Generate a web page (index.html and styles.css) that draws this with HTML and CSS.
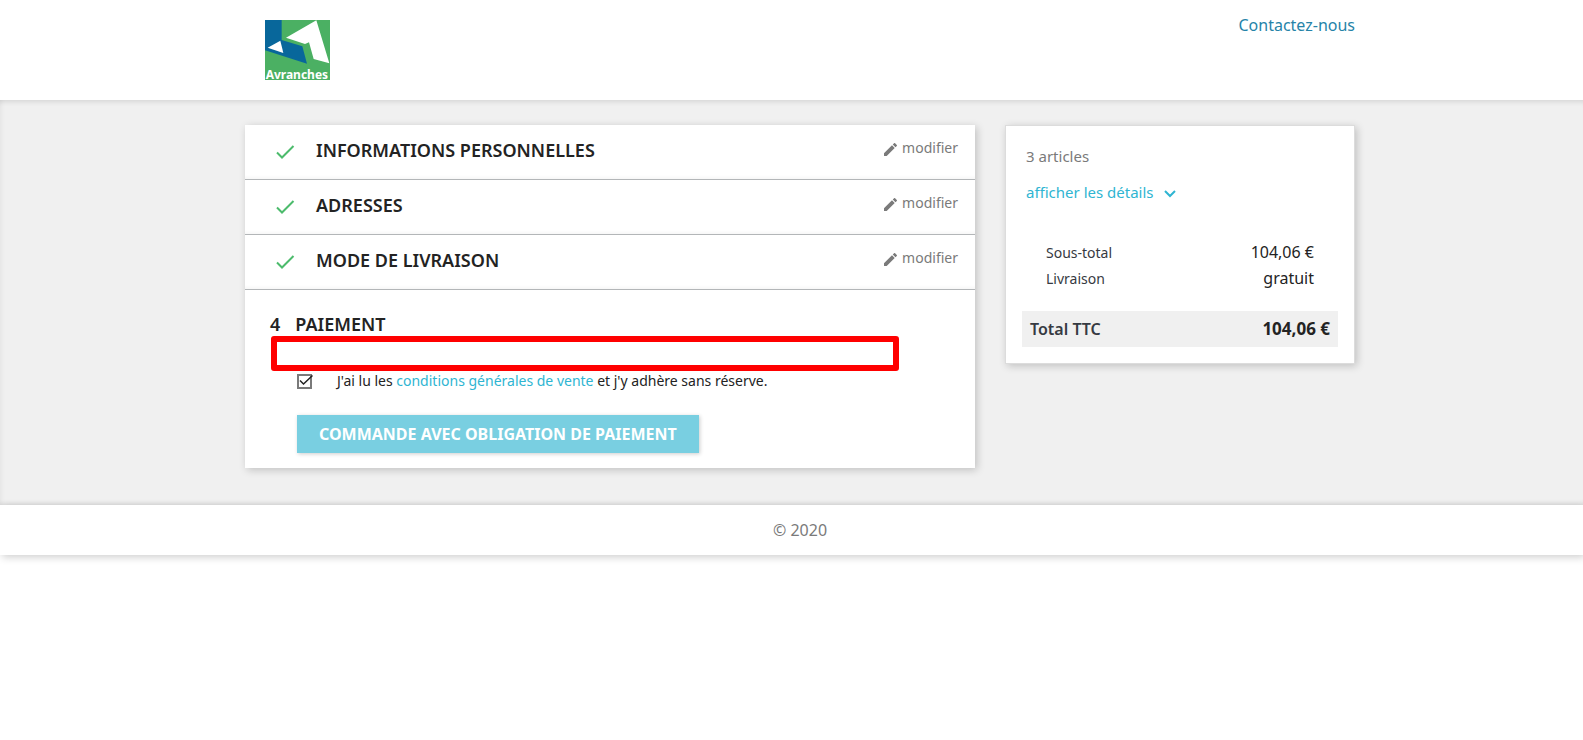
FILE: index.html
```html
<!DOCTYPE html>
<html lang="fr">
<head>
<meta charset="utf-8">
<title>Commande</title>
<meta name="viewport" content="width=device-width, initial-scale=1">
<link rel="stylesheet" href="styles.css">
</head>
<body>
<header class="header">
  <div class="container header-inner">
    <a class="logo" href="#" aria-label="Avranches">
      <svg width="65" height="60" viewBox="0 0 195 180">
        <rect width="195" height="180" fill="#4bb063"/>
        <path d="M0 0H50V60L112 79L126 131L0 91Z" fill="#08679b"/>
        <path d="M8 83L46 62L55 99Z" fill="#fff"/>
        <path d="M63 53L154 1L193 130L146 117L132 67L120 72Z" fill="#fff"/>
        <text class="logo-text" x="2" y="176">Avranches</text>
      </svg>
    </a>
    <a class="contact" href="#">Contactez-nous</a>
  </div>
</header>
<main class="main">
  <div class="container columns">
    <div class="card checkout">
      <section class="step">
        <svg class="check" width="20" height="16" viewBox="0 0 20 16"><path d="M1 8.500L6 13.500L17.500 2"/></svg>
        <h1 class="step-title">INFORMATIONS PERSONNELLES</h1>
        <button class="edit" type="button"><svg width="13" height="13" viewBox="3 3 18 18"><path d="M3 17.250V21h3.750L17.810 9.940l-3.750-3.750L3 17.250zM20.710 7.040a1 1 0 0 0 0-1.410l-2.340-2.340a1 1 0 0 0-1.410 0l-1.830 1.830 3.750 3.750 1.830-1.830z"/></svg>modifier</button>
      </section>
      <section class="step">
        <svg class="check" width="20" height="16" viewBox="0 0 20 16"><path d="M1 8.500L6 13.500L17.500 2"/></svg>
        <h1 class="step-title">ADRESSES</h1>
        <button class="edit" type="button"><svg width="13" height="13" viewBox="3 3 18 18"><path d="M3 17.250V21h3.750L17.810 9.940l-3.750-3.750L3 17.250zM20.710 7.040a1 1 0 0 0 0-1.410l-2.340-2.340a1 1 0 0 0-1.410 0l-1.830 1.830 3.750 3.750 1.830-1.830z"/></svg>modifier</button>
      </section>
      <section class="step">
        <svg class="check" width="20" height="16" viewBox="0 0 20 16"><path d="M1 8.500L6 13.500L17.500 2"/></svg>
        <h1 class="step-title">MODE DE LIVRAISON</h1>
        <button class="edit" type="button"><svg width="13" height="13" viewBox="3 3 18 18"><path d="M3 17.250V21h3.750L17.810 9.940l-3.750-3.750L3 17.250zM20.710 7.040a1 1 0 0 0 0-1.410l-2.340-2.340a1 1 0 0 0-1.410 0l-1.830 1.830 3.750 3.750 1.830-1.830z"/></svg>modifier</button>
      </section>
      <section class="payment">
        <h1 class="payment-title"><span>4</span><span>PAIEMENT</span></h1>
        <div class="highlight"></div>
        <div class="terms">
          <span class="terms-control">
            <input class="terms-box" type="checkbox" id="terms" checked>
            <svg class="terms-tick" width="16" height="15" viewBox="0 0 16 15"><path d="M3 6.500L6.500 10L15.500 1.500"/></svg>
          </span>
          <label for="terms">J'ai lu les <a class="link" href="#">conditions générales de vente</a> et j'y adhère sans réserve.</label>
        </div>
        <button class="order" type="submit">COMMANDE AVEC OBLIGATION DE PAIEMENT</button>
      </section>
    </div>
    <aside class="card summary">
      <p class="count">3 articles</p>
      <a class="link details" href="#">afficher les détails
        <svg width="12" height="8" viewBox="0 0 12 8"><path d="M1 1L6 6L11 1"/></svg>
      </a>
      <dl class="lines">
        <div class="line"><dt>Sous-total</dt><dd>104,06 €</dd></div>
        <div class="line"><dt>Livraison</dt><dd>gratuit</dd></div>
      </dl>
      <div class="total"><span>Total TTC</span><span class="total-value">104,06 €</span></div>
    </aside>
  </div>
</main>
<footer class="footer">© 2020</footer>
</body>
</html>
```

FILE: styles.css
```css
* {
  box-sizing: border-box;
}

body {
  min-height: 100vh;
  margin: 0;
  background: #fff;
  color: #232323;
  font-family: "Noto Sans", sans-serif;
  font-size: 16px;
  line-height: 22px;
}

h1,
p,
dl,
dd {
  margin: 0;
}

a {
  text-decoration: none;
}

button {
  border: 0;
  font-family: inherit;
  cursor: pointer;
}

.header,
.main,
.footer {
  padding-left: 17px;
}

.container {
  max-width: 1140px;
  margin: 0 auto;
  padding: 0 15px;
}

.header-inner {
  display: flex;
  justify-content: space-between;
  align-items: flex-start;
  padding-top: 14px;
  padding-bottom: 20px;
}

.logo {
  margin: 6px 0 0 20px;
}

.logo svg {
  display: block;
  overflow: visible;
}

.logo-text {
  fill: #fff;
  font-family: "Noto Sans", sans-serif;
  font-size: 36px;
  font-weight: 700;
}

.contact {
  color: #2583a8;
}

.main {
  padding-top: 25px;
  padding-bottom: 37px;
  background: #f0f0f0;
  box-shadow:
    inset 0 6px 5px -4px rgba(0, 0, 0, 0.11),
    inset 0 -5px 5px -4px rgba(0, 0, 0, 0.08),
    inset 5px 0 5px -4px rgba(0, 0, 0, 0.06);
}

.columns {
  display: flex;
  align-items: flex-start;
  gap: 30px;
}

.card {
  background: #fff;
  box-shadow: 2px 2px 8px 0 rgba(0, 0, 0, 0.2);
}

.checkout {
  flex: 1;
}

.step {
  display: flex;
  align-items: flex-start;
  min-height: 55px;
  padding: 11px 17px 0 31px;
  border-bottom: 1px solid #b3b6b8;
  box-shadow: inset 0 -5px 4px -4px rgba(0, 0, 0, 0.05);
}

.check {
  margin: 8px 20px 0 0;
  fill: none;
  stroke: #4cbb6c;
  stroke-width: 2;
}

.step-title,
.payment-title {
  font-size: 18px;
  font-weight: 600;
}

.step-title {
  flex: 1;
  padding-top: 3px;
}

.edit {
  display: flex;
  align-items: center;
  gap: 5px;
  padding: 0;
  background: none;
  color: #7a7a7a;
  font-size: 14px;
  line-height: 24px;
}

.edit svg {
  margin-top: 2px;
  fill: #7a7a7a;
}

.payment {
  padding: 23px 76px 15px 25px;
}

.payment-title {
  display: flex;
  gap: 15px;
}

.highlight {
  height: 35px;
  margin: 1px 0 0 1px;
  border: 6px solid #f00;
  border-radius: 3px;
}

.terms {
  display: flex;
  align-items: center;
  gap: 24px;
  margin-left: 27px;
  font-size: 14px;
  line-height: 20px;
}

.terms-control {
  display: grid;
}

.terms-box,
.terms-tick {
  grid-area: 1 / 1;
}

.terms-box {
  appearance: none;
  width: 15px;
  height: 15px;
  margin: 0;
  border: 2px solid #7a7a7a;
}

.terms-tick {
  fill: none;
  stroke: #232323;
  stroke-width: 1.5;
  pointer-events: none;
  visibility: hidden;
}

.terms-box:checked + .terms-tick {
  visibility: visible;
}

.link {
  color: #2fb5d2;
}

.order {
  display: block;
  margin: 24px 0 0 27px;
  padding: 8px 22px;
  background: #79cfe1;
  box-shadow: 1px 1px 4px 0 rgba(0, 0, 0, 0.2);
  color: #fff;
  font-size: 16px;
  font-weight: 700;
  line-height: 22px;
}

.summary {
  flex: 0 0 350px;
  padding: 19px 16px 16px;
  border: 1px solid #dcdcdc;
}

.count {
  padding-left: 4px;
  color: #7a7a7a;
  font-size: 15px;
}

.details {
  display: flex;
  align-items: center;
  gap: 10px;
  margin-top: 14px;
  padding-left: 4px;
  font-size: 15px;
}

.details svg {
  margin-top: 3px;
  fill: none;
  stroke: #2fb5d2;
  stroke-width: 2;
}

.lines {
  display: grid;
  gap: 3px;
  margin: 38px 24px 0;
}

.line {
  display: flex;
  align-items: baseline;
  justify-content: space-between;
}

.line dt {
  color: #363a42;
  font-size: 14px;
}

.total {
  display: flex;
  align-items: center;
  justify-content: space-between;
  margin-top: 21px;
  padding: 7px 8px;
  background: #f0f0f0;
  color: #363a42;
  font-weight: 600;
}

.total-value {
  color: #232323;
  font-size: 17px;
  font-weight: 700;
}

.footer {
  padding-top: 14px;
  padding-bottom: 14px;
  background: #fff;
  box-shadow: 2px 2px 8px 0 rgba(0, 0, 0, 0.2);
  color: #7a7a7a;
  text-align: center;
}
```
